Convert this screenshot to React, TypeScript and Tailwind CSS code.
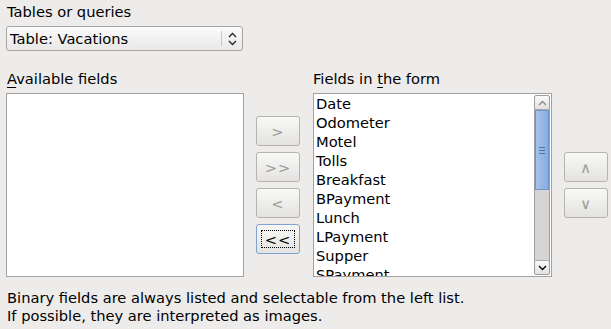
import React from "react";

const formFields = [
  "Date",
  "Odometer",
  "Motel",
  "Tolls",
  "Breakfast",
  "BPayment",
  "Lunch",
  "LPayment",
  "Supper",
  "SPayment",
];

function MoveButton({
  label,
  disabled,
  focused,
}: {
  label: string;
  disabled?: boolean;
  focused?: boolean;
}) {
  return (
    <div
      className={
        "relative flex h-[30px] w-[44px] items-center justify-center rounded-[3px] border bg-gradient-to-b from-[#f8f8f7] to-[#e4e3e1] " +
        (focused ? "border-[#7fa2d0]" : "border-[#b4b3b1]")
      }
    >
      {focused && (
        <div className="absolute inset-x-[4px] inset-y-[5px] border border-dotted border-black" />
      )}
      <span
        className={
          "tracking-[1px] " + (disabled ? "text-[#9a9a98]" : "text-black")
        }
      >
        {label}
      </span>
    </div>
  );
}

function Chevron({ up }: { up?: boolean }) {
  return (
    <svg width="9" height="6" viewBox="0 0 9 6" className="block">
      <path
        d={up ? "M1 5 L4.5 1.5 L8 5" : "M1 1 L4.5 4.5 L8 1"}
        fill="none"
        stroke="currentColor"
        strokeWidth="1.3"
      />
    </svg>
  );
}

export default function App() {
  return (
    <div
      className="h-[329px] w-[611px] overflow-hidden bg-[#edeceb] text-[14.67px] leading-[17px] text-black"
      style={{ fontFamily: '"DejaVu Sans", sans-serif' }}
    >
      <div className="pl-[6px] pt-[3px]">
        <div className="pl-[1px]">Tables or queries</div>

        <div className="mt-[6px] flex h-[25px] w-[237px] items-center rounded-[3px] border border-[#a7a6a4] bg-gradient-to-b from-[#fbfbfb] to-[#e9e8e7]">
          <span className="flex-1 pl-[3px]">Table: Vacations</span>
          <div className="h-[15px] w-px bg-[#c9c8c6]" />
          <div className="flex w-[20px] flex-col items-center gap-[2px] text-[#222]">
            <Chevron up />
            <Chevron />
          </div>
        </div>

        <div className="mt-[19px] flex">
          <div className="w-[238px]">
            <div className="pl-[1px]">
              <span className="underline underline-offset-[3px]">A</span>
              vailable fields
            </div>
            <div className="mt-[6px] h-[184px] border border-[#a3a2a0] bg-white" />
          </div>

          <div className="ml-[12px] mt-[46px] flex w-[44px] flex-col gap-[6px]">
            <MoveButton label=">" disabled />
            <MoveButton label=">>" disabled />
            <MoveButton label="<" disabled />
            <MoveButton label="<<" focused />
          </div>

          <div className="ml-[13px] w-[239px]">
            <div>
              Fields in <span className="underline underline-offset-[3px]">t</span>he
              form
            </div>
            <div className="mt-[6px] flex h-[184px] border border-[#a3a2a0] bg-white">
              <div className="flex-1 overflow-hidden pl-[2px] pt-0 leading-[19px]">
                {formFields.map((f) => (
                  <div key={f} className="h-[19px]">
                    {f}
                  </div>
                ))}
              </div>
              <div className="my-px mr-px flex w-[16px] flex-col rounded-[2px] border border-[#9f9e9c] bg-[#d6d5d3]">
                <div className="flex h-[14px] items-center justify-center rounded-[2px] border-b border-[#a9a8a6] bg-gradient-to-b from-[#fafafa] to-[#e2e1df] text-[#8a8a88]">
                  <Chevron up />
                </div>
                <div className="flex h-[80px] items-center justify-center border border-[#6e96cc] bg-gradient-to-r from-[#a6c3ea] to-[#86acdf]">
                  <div className="flex flex-col gap-[2px]">
                    <div className="h-px w-[6px] bg-[#4f75a8]" />
                    <div className="h-px w-[6px] bg-[#4f75a8]" />
                    <div className="h-px w-[6px] bg-[#4f75a8]" />
                  </div>
                </div>
                <div className="flex-1" />
                <div className="flex h-[14px] items-center justify-center rounded-[2px] border-t border-[#a9a8a6] bg-gradient-to-b from-[#fafafa] to-[#e2e1df] text-black">
                  <Chevron />
                </div>
              </div>
            </div>
          </div>

          <div className="ml-[12px] mt-[82px] flex w-[44px] flex-col gap-[6px]">
            <MoveButton label="∧" disabled />
            <MoveButton label="∨" disabled />
          </div>
        </div>

        <div className="mt-[12px] pl-[1px] leading-[18px]">
          <div>Binary fields are always listed and selectable from the left list.</div>
          <div>If possible, they are interpreted as images.</div>
        </div>
      </div>
    </div>
  );
}
